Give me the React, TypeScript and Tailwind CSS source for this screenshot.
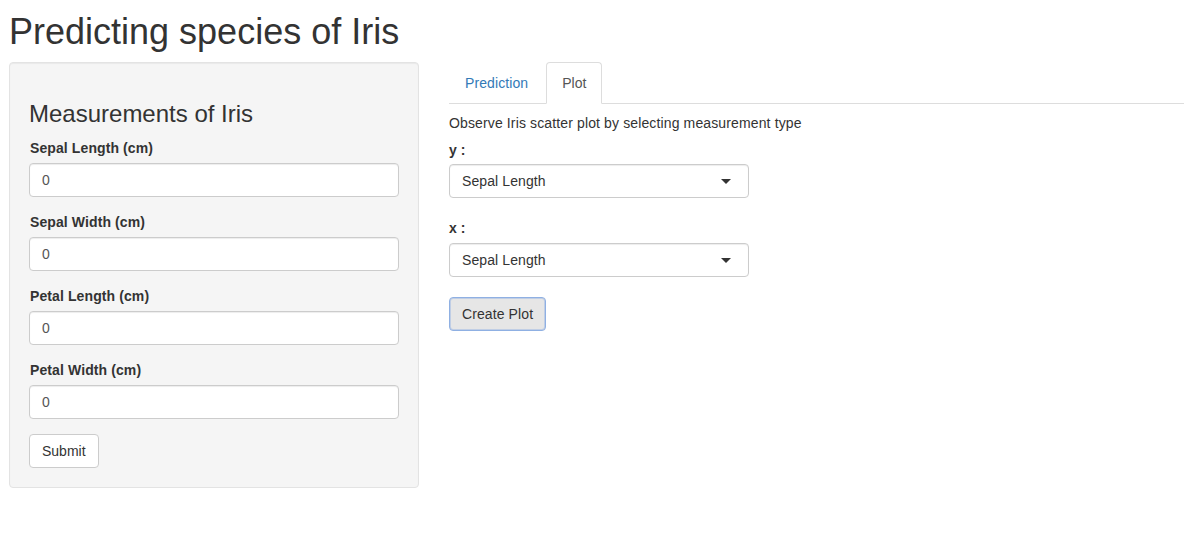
import React from "react";

const font = { fontFamily: '"Liberation Sans", Arial, Helvetica, sans-serif' };

function Field({ label }: { label: string }) {
  return (
    <div className="mb-[15px]">
      <label className="block text-[14px] leading-[20px] font-bold text-[#333] mb-[5px] pl-[1px] tracking-[0.1px]">{label}</label>
      <div className="h-[34px] w-full border border-[#ccc] rounded-[4px] bg-white px-[12px] flex items-center text-[14px] text-[#555] shadow-[inset_0_1px_1px_rgba(0,0,0,0.075)]">
        0
      </div>
    </div>
  );
}

function Select({ value }: { value: string }) {
  return (
    <div className="relative h-[34px] w-[300px] border border-[#ccc] rounded-[4px] bg-white px-[12px] flex items-center text-[14px] text-[#333] tracking-[0.1px] shadow-[inset_0_1px_1px_rgba(0,0,0,0.075)]">
      {value}
      <span className="absolute right-[17px] top-[14px] w-0 h-0 border-t-[5px] border-t-[#333] border-x-[5px] border-x-transparent" />
    </div>
  );
}

export default function App() {
  return (
    <div style={font} className="bg-white w-[1184px] h-[556px] overflow-hidden text-[#333] text-[14px]">
      <div className="pl-[9px]">
        <h1 className="mt-[12px] mb-[10px] text-[36px] leading-[40px] font-normal text-[#333]">
          Predicting species of Iris
        </h1>
        <div className="flex items-start gap-[30px]">
          <div className="w-[410px] shrink-0 bg-[#f5f5f5] border border-[#e3e3e3] rounded-[4px] p-[19px] shadow-[inset_0_1px_1px_rgba(0,0,0,0.05)]">
            <h3 className="mt-[19px] mb-[11px] text-[24px] leading-[26px] font-normal text-[#333]">
              Measurements of Iris
            </h3>
            <Field label="Sepal Length (cm)" />
            <Field label="Sepal Width (cm)" />
            <Field label="Petal Length (cm)" />
            <Field label="Petal Width (cm)" />
            <button className="h-[34px] px-[12px] border border-[#ccc] rounded-[4px] bg-white text-[14px] text-[#333] leading-[20px]">
              Submit
            </button>
          </div>
          <div className="flex-1">
            <ul className="flex border-b border-[#ddd]">
              <li className="-mb-px mr-[2px]">
                <span className="block px-[15px] py-[10px] leading-[20px] border border-transparent rounded-t-[4px] text-[#337ab7] tracking-[0.1px]">
                  Prediction
                </span>
              </li>
              <li className="-mb-px mr-[2px]">
                <span className="block px-[15px] py-[10px] leading-[20px] border border-[#ddd] border-b-white bg-white rounded-t-[4px] text-[#555]">
                  Plot
                </span>
              </li>
            </ul>
            <p className="mt-[9px] mb-[7px] leading-[20px] text-[#333] tracking-[0.13px]">
              Observe Iris scatter plot by selecting measurement type
            </p>
            <label className="block font-bold leading-[20px] mb-[4px]">y :</label>
            <Select value="Sepal Length" />
            <label className="block font-bold leading-[20px] mt-[20px] mb-[5px]">x :</label>
            <Select value="Sepal Length" />
            <button className="mt-[20px] h-[34px] px-[12px] border border-[#8fb0e3] rounded-[4px] bg-[#e6e6e6] text-[14px] text-[#333] leading-[20px] tracking-[0.1px] shadow-[inset_0_0_0_1px_rgba(120,160,225,0.35)]">
              Create Plot
            </button>
          </div>
        </div>
      </div>
    </div>
  );
}
